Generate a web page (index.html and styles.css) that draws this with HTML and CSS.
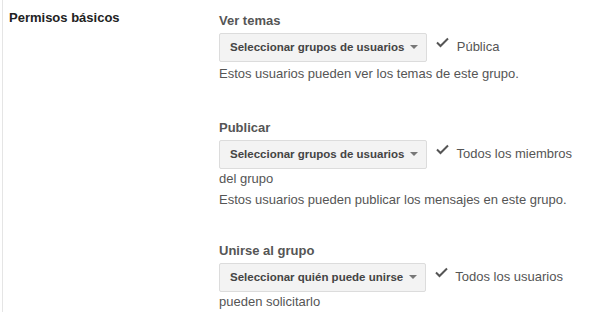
FILE: index.html
```html
<!DOCTYPE html>
<html lang="es">

<head>
    <meta charset="UTF-8">
    <title>Permisos básicos</title>
    <link rel="stylesheet" href="styles.css">
</head>

<body>
    <div class="settings">
        <div class="settings-row">
            <div class="row-title">Permisos básicos</div>

            <div class="row-body">
                <!-- Ver temas -->
                <div class="perm">
                    <div class="perm-label">Ver temas</div>
                    <div class="perm-line">
                        <span class="select-btn">Seleccionar grupos de usuarios<span class="caret"></span></span>
                        <svg class="check" width="13" height="11" viewBox="0 0 13 11"><path d="M1 5.5 L4.5 9 L12 1.5" fill="none" stroke="#555" stroke-width="2"/></svg>
                        <span class="perm-value">Pública</span>
                    </div>
                    <div class="perm-desc">Estos usuarios pueden ver los temas de este grupo.</div>
                </div>

                <!-- Publicar -->
                <div class="perm">
                    <div class="perm-label">Publicar</div>
                    <div class="perm-line">
                        <span class="select-btn">Seleccionar grupos de usuarios<span class="caret"></span></span>
                        <svg class="check" width="13" height="11" viewBox="0 0 13 11"><path d="M1 5.5 L4.5 9 L12 1.5" fill="none" stroke="#555" stroke-width="2"/></svg>
                        <span class="perm-value">Todos los miembros del grupo</span>
                    </div>
                    <div class="perm-desc">Estos usuarios pueden publicar los mensajes en este grupo.</div>
                </div>

                <!-- Unirse al grupo -->
                <div class="perm">
                    <div class="perm-label">Unirse al grupo</div>
                    <div class="perm-line">
                        <span class="select-btn">Seleccionar quién puede unirse<span class="caret"></span></span>
                        <svg class="check" width="13" height="11" viewBox="0 0 13 11"><path d="M1 5.5 L4.5 9 L12 1.5" fill="none" stroke="#555" stroke-width="2"/></svg>
                        <span class="perm-value">Todos los usuarios pueden solicitarlo</span>
                    </div>
                </div>
            </div>
        </div>
    </div>
</body>

</html>
```

FILE: styles.css
```css
body {
    margin: 0;
    font-family: "Liberation Sans", Arial, sans-serif;
    font-size: 13px;
    line-height: 19px;
    background-color: #fff;
    color: #555;
}

.settings {
    margin-left: 2px;
    border-left: 1px solid #e5e5e5;
    height: 312px;
    overflow: hidden;
}

.settings-row {
    display: flex;
}

.row-title {
    width: 210px;
    padding: 8px 0 0 6px;
    font-weight: bold;
    color: #222;
}

.row-body {
    width: 366px;
    padding-top: 11px;
}

.perm {
    margin-bottom: 32px;
}

.perm:first-child {
    margin-bottom: 35px;
}

.perm-label {
    font-weight: bold;
    color: #555;
    margin-bottom: 3px;
}

.perm-line {
    color: #555;
}

.select-btn {
    display: inline-block;
    vertical-align: middle;
    box-sizing: border-box;
    height: 29px;
    line-height: 27px;
    padding: 0 8px 0 10px;
    margin-right: 2px;
    background-color: #f3f3f3;
    border: 1px solid #dcdcdc;
    border-radius: 2px;
    font-size: 11.5px;
    font-weight: bold;
    color: #444;
}

.caret {
    display: inline-block;
    vertical-align: middle;
    margin: -2px 0 0 6px;
    border-left: 4px solid transparent;
    border-right: 4px solid transparent;
    border-top: 4px solid #777;
}

.check {
    vertical-align: 3px;
    margin: 0 4px 0 3px;
}

.perm-desc {
    margin-top: 2px;
    color: #555;
}
```
